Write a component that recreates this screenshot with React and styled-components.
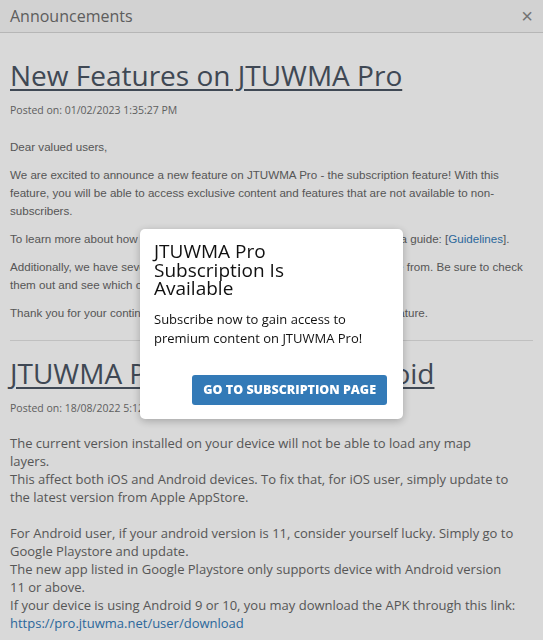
import styled, { createGlobalStyle } from "styled-components";

const GlobalStyle = createGlobalStyle`
  html, body {
    margin: 0;
    padding: 0;
    background: #fff;
  }
  * {
    box-sizing: border-box;
  }
`;

const geo = `"Open Sans", "Noto Sans", sans-serif`;

const Page = styled.div`
  width: 543px;
  height: 640px;
  overflow: hidden;
  background: #fff;
`;

const Header = styled.div`
  height: 33px;
  padding: 0 10px;
  display: flex;
  align-items: center;
  justify-content: space-between;
  background: #f7f7f7;
  border-bottom: 1px solid #d6d6d6;
  font-family: ${geo};
  font-size: 16px;
  color: #6e6e6e;
`;

const Close = styled.button`
  border: none;
  background: none;
  padding: 0;
  font-size: 20px;
  line-height: 1;
  color: #888;
  cursor: pointer;
  font-family: "Liberation Sans", sans-serif;
`;

const Content = styled.div`
  padding: 0 10px;
`;

const Article = styled.div`
  padding-top: 24px;
  padding-bottom: 18px;
  & + & {
    border-top: 1px solid #e2e2e2;
    padding-top: 14px;
  }
`;

const Title = styled.a`
  display: inline-block;
  font-family: ${geo};
  font-size: 28px;
  line-height: 36px;
  color: #4b5563;
  text-decoration: underline;
  text-underline-offset: 3px;
  text-decoration-thickness: 2px;
`;

const Posted = styled.div`
  margin-top: 10px;
  font-family: ${geo};
  font-size: 10.5px;
  line-height: 15px;
  color: #707070;
`;

const Body = styled.div`
  margin-top: ${(p) => (p.$classic ? "20px" : "18px")};
  padding-right: ${(p) => (p.$classic ? "0" : "16px")};
  font-family: ${(p) => (p.$classic ? `"Liberation Sans", Arial, sans-serif` : geo)};
  font-size: ${(p) => (p.$classic ? "11.6px" : "13px")};
  line-height: 18px;
  color: #666;

  p {
    margin: 0 0 10px;
  }
  p:last-child {
    margin-bottom: 0;
  }
  a {
    color: #337ab7;
    text-decoration: none;
  }
`;

const Backdrop = styled.div`
  position: fixed;
  inset: 0;
  background: rgba(0, 0, 0, 0.15);
  display: flex;
  align-items: center;
  justify-content: center;
  padding-top: 8px;
`;

const Modal = styled.div`
  width: 263px;
  background: #fff;
  border-radius: 5px;
  box-shadow: 0 2px 8px rgba(0, 0, 0, 0.25);
  padding: 13px 16px 14px 14px;
  font-family: ${geo};
  color: #111;
`;

const ModalTitle = styled.h3`
  margin: 0;
  max-width: 160px;
  font-size: 19px;
  font-weight: 400;
  line-height: 18.5px;
`;

const ModalText = styled.p`
  margin: 12px 0 0;
  font-size: 13px;
  line-height: 19px;
`;

const Actions = styled.div`
  display: flex;
  justify-content: flex-end;
  margin-top: 27px;
`;

const Button = styled.button`
  height: 30px;
  padding: 0 11px;
  border: none;
  border-radius: 3px;
  background: #337ab7;
  color: #fff;
  font-family: ${geo};
  font-weight: 800;
  font-size: 12.5px;
  text-transform: uppercase;
  cursor: pointer;
`;

export default function App() {
  return (
    <Page>
      <GlobalStyle />
      <Header>
        <span>Announcements</span>
        <Close aria-label="close">×</Close>
      </Header>
      <Content>
        <Article>
          <Title href="#">New Features on JTUWMA Pro</Title>
          <Posted>Posted on: 01/02/2023 1:35:27 PM</Posted>
          <Body $classic>
            <p>Dear valued users,</p>
            <p>
              We are excited to announce a new feature on JTUWMA Pro - the subscription feature! With this
              feature, you will be able to access exclusive content and features that are not available to
              non-subscribers.
            </p>
            <p>
              To learn more about how to subscribe and all of the benefits, please refer to a guide: [
              <a href="#">Guidelines</a>].
            </p>
            <p>
              Additionally, we have several subscription plans obtainable for you to choose from. Be sure to
              check them out and see which one works best for you.
            </p>
            <p>Thank you for your continued support, and we hope you'll enjoy the latest feature.</p>
          </Body>
        </Article>
        <Article>
          <Title href="#">JTUWMA Pro Update for Android</Title>
          <Posted>Posted on: 18/08/2022 5:12:40 PM</Posted>
          <Body>
            The current version installed on your device will not be able to load any map
            <br />
            layers.
            <br />
            This affect both iOS and Android devices. To fix that, for iOS user, simply update to the latest
            version from Apple AppStore.
            <br />
            <br />
            For Android user, if your android version is 11, consider yourself lucky. Simply go to Google
            Playstore and update.
            <br />
            The new app listed in Google Playstore only supports device with Android version 11 or above.
            <br />
            If your device is using Android 9 or 10, you may download the APK through this link:{" "}
            <a href="#">https://pro.jtuwma.net/user/download</a>
          </Body>
        </Article>
      </Content>
      <Backdrop>
        <Modal>
          <ModalTitle>JTUWMA Pro Subscription Is Available</ModalTitle>
          <ModalText>Subscribe now to gain access to premium content on JTUWMA Pro!</ModalText>
          <Actions>
            <Button>Go to subscription page</Button>
          </Actions>
        </Modal>
      </Backdrop>
    </Page>
  );
}
